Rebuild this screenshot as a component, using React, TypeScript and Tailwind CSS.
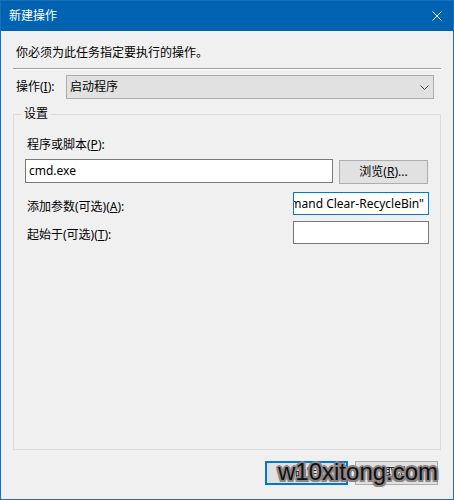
import React from "react";

const font = { fontFamily: '"Noto Sans", "Noto Sans CJK SC", sans-serif' };

export default function App() {
  return (
    <div
      className="relative w-[454px] h-[500px] border border-[#1a6fbd] bg-[#f0f0f0] flex flex-col text-[12px] leading-[16px] text-black"
      style={font}
    >
      {/* Title bar */}
      <div className="h-[30px] bg-[#0063b1] flex items-center justify-between pl-[8px] pr-[10px] shrink-0">
        <span className="text-white text-[12px]">新建操作</span>
        <svg width="10" height="10" viewBox="0 0 10 10" className="mr-[1px]">
          <path d="M0.5 0.5 L9.5 9.5 M9.5 0.5 L0.5 9.5" stroke="#ffffff" strokeWidth="1" fill="none" />
        </svg>
      </div>

      {/* Body */}
      <div className="flex flex-col flex-1">
        <div className="mt-[14px] pl-[15px]">你必须为此任务指定要执行的操作。</div>
        <div className="mt-[7px] ml-[12px] w-[428px] h-[2px] border-t border-[#a0a0a0] border-b border-b-white" />

        {/* Action row */}
        <div className="mt-[5px] flex items-center pl-[15px] h-[24px]">
          <span className="w-[50px]">操作(<span className="underline">I</span>):</span>
          <div className="w-[368px] h-[24px] border border-[#adadad] bg-[#e1e1e1] flex items-center justify-between pl-[3px] pr-[4px]">
            <span>启动程序</span>
            <svg width="9" height="5" viewBox="0 0 9 5">
              <path d="M0.5 0.5 L4.5 4.5 L8.5 0.5" stroke="#404040" strokeWidth="1" fill="none" />
            </svg>
          </div>
        </div>

        {/* Group box */}
        <div className="relative mt-[15px] ml-[12px] w-[428px] h-[336px] border border-[#dcdcdc]">
          <span className="absolute left-[7px] top-[-9px] px-[3px] bg-[#f0f0f0]">设置</span>
          <div className="pt-[22px] pl-[11px] flex flex-col">
            <div className="pl-[2px]">程序或脚本(<span className="underline">P</span>):</div>
            <div className="mt-[6px] flex items-start">
              <div className="w-[308px] h-[24px] border border-[#7a7a7a] bg-white flex items-center pl-[3px]">
                cmd.exe
              </div>
              <button className="ml-[6px] mt-[1px] w-[89px] h-[24px] border border-[#adadad] bg-[#e1e1e1] flex items-center justify-center">
                浏览(<span className="underline">R</span>)...
              </button>
            </div>
            <div className="mt-[8px] flex items-start">
              <div className="w-[268px] pl-[2px] mt-[7px]">添加参数(可选)(<span className="underline">A</span>):</div>
              <div className="w-[136px] h-[23px] border border-[#0078d7] bg-white flex items-center justify-end overflow-hidden pr-[3px] whitespace-nowrap">
                <span>-NoProfile -Command Clear-RecycleBin"</span>
                <span className="inline-block w-[1px] h-[15px] bg-black ml-[1px]" />
              </div>
            </div>
            <div className="mt-[6px] flex items-start">
              <div className="w-[268px] pl-[2px] mt-[6px]">起始于(可选)(<span className="underline">T</span>):</div>
              <div className="w-[136px] h-[23px] border border-[#7a7a7a] bg-white" />
            </div>
          </div>
        </div>

        {/* Buttons */}
        <div className="mt-[11px] flex justify-end gap-[7px] pr-[15px]">
          <button className="w-[83px] h-[24px] border-2 border-[#0078d7] bg-[#e1e1e1] flex items-center justify-center">
            确定
          </button>
          <button className="w-[83px] h-[24px] border border-[#adadad] bg-[#e1e1e1] flex items-center justify-center">
            取消
          </button>
        </div>
      </div>

      {/* Watermark */}
      <div
        className="absolute left-[277px] top-[459px] text-[24px] leading-[24px] text-[#111111] whitespace-nowrap [text-shadow:2px_0_0_#8d8585,-2px_0_0_#8d8585,0_2px_0_#8d8585,0_-2px_0_#8d8585,1.5px_1.5px_0_#8d8585,-1.5px_1.5px_0_#8d8585,1.5px_-1.5px_0_#8d8585,-1.5px_-1.5px_0_#8d8585,0_0_3px_#8d8585]"
        style={{ fontFamily: '"Liberation Sans", Arial, sans-serif' }}
      >
        w10xitong.com
      </div>
    </div>
  );
}
